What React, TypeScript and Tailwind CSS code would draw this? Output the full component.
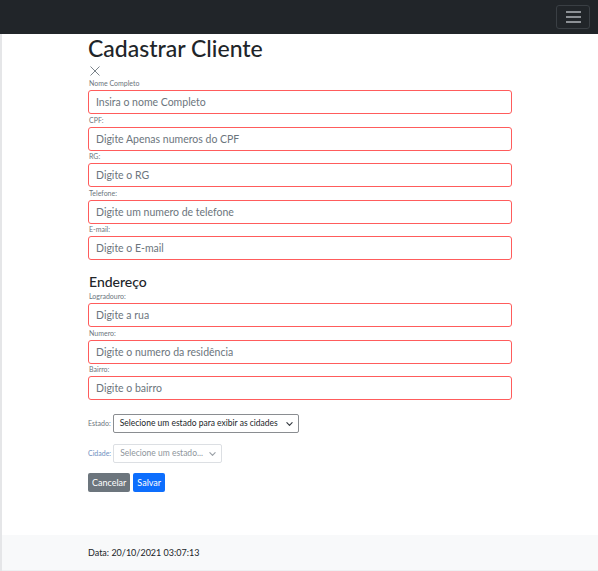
import { FC } from 'react';

const fields = [
  { label: 'Nome Completo', placeholder: 'Insira o nome Completo' },
  { label: 'CPF:', placeholder: 'Digite Apenas numeros do CPF' },
  { label: 'RG:', placeholder: 'Digite o RG' },
  { label: 'Telefone:', placeholder: 'Digite um numero de telefone' },
  { label: 'E-mail:', placeholder: 'Digite o E-mail' },
];

const addressFields = [
  { label: 'Logradouro:', placeholder: 'Digite a rua' },
  { label: 'Numero:', placeholder: 'Digite o numero da residência' },
  { label: 'Bairro:', placeholder: 'Digite o bairro' },
];

const Field: FC<{ label: string; placeholder: string }> = ({ label, placeholder }) => (
  <div className="flex flex-col">
    <label className="text-[7px] leading-[11px] text-[#6c757d] h-[12px] pl-[1px] whitespace-nowrap">{label}</label>
    <input
      placeholder={placeholder}
      className="h-[24px] w-full rounded-[3px] border border-[#ff5c5c] px-[7px] text-[10.5px] outline-none placeholder:text-[#6c757d]"
    />
  </div>
);

const Chevron: FC<{ light?: boolean }> = ({ light }) => (
  <svg width="7" height="7" viewBox="0 0 16 16" className="absolute right-[6px] top-1/2 -translate-y-1/2">
    <path d="M2 5l6 6 6-6" fill="none" stroke={light ? '#9aa0a6' : '#343a40'} strokeWidth="2.6" strokeLinecap="round" strokeLinejoin="round" />
  </svg>
);

export default function App() {
  return (
    <div className="min-h-[571px] w-[598px] bg-white flex flex-col" style={{ fontFamily: 'Lato, "Noto Sans", sans-serif' }}>
      <nav className="h-[34px] bg-[#212529] flex items-center justify-end pr-[8px]">
        <button className="w-[34px] h-[24px] rounded-[3px] border border-[#3a3f44] flex flex-col items-center justify-center gap-[3px]">
          <span className="block w-[15px] h-[2px] bg-[#8c9095]" />
          <span className="block w-[15px] h-[2px] bg-[#8c9095]" />
          <span className="block w-[15px] h-[2px] bg-[#8c9095]" />
        </button>
      </nav>
      <div className="flex-1 flex flex-col border-l-2 border-[#e5e6e8]">
        <main className="flex-1 pl-[86px] pr-[86px]">
          <h1 className="text-[23px] leading-[29px] font-medium text-[#212529]">Cadastrar Cliente</h1>
          <button className="mt-[1px] ml-[1px] h-[14px] w-[12px] flex items-center justify-center">
            <svg width="10" height="10" viewBox="0 0 10 10">
              <path d="M0.5 0.5l9 9M9.5 0.5l-9 9" stroke="#6c757d" strokeWidth="0.9" />
            </svg>
          </button>
          <div className="flex flex-col gap-[0.5px]">
            {fields.map((f) => (
              <Field key={f.label} {...f} />
            ))}
          </div>
          <h2 className="mt-[13px] text-[14px] leading-[18px] font-medium text-[#212529] pl-[1px]">Endereço</h2>
          <div className="flex flex-col gap-[0.5px]">
            {addressFields.map((f) => (
              <Field key={f.label} {...f} />
            ))}
          </div>
          <div className="mt-[14px] flex items-center gap-[2px]">
            <span className="text-[7px] text-[#6c757d]">Estado:</span>
            <div className="relative">
              <div className="h-[19px] w-[186px] rounded-[2px] border border-[#8a8d91] pl-[6px] text-[8.5px] leading-[17px] text-[#212529] whitespace-nowrap overflow-hidden">
                Selecione um estado para exibir as cidades
              </div>
              <Chevron />
            </div>
          </div>
          <div className="mt-[11px] flex items-center gap-[2px]">
            <span className="text-[7px] text-[#6f8fc0]">Cidade:</span>
            <div className="relative">
              <div className="h-[19px] w-[109px] rounded-[2px] border border-[#dcdfe3] pl-[6px] text-[8.5px] leading-[17px] text-[#8e959c] whitespace-nowrap overflow-hidden">
                Selecione um estado...
              </div>
              <Chevron light />
            </div>
          </div>
          <div className="mt-[10px] flex gap-[3px]">
            <button className="h-[19px] px-[4px] rounded-[2px] bg-[#6c757d] text-white text-[9px]">Cancelar</button>
            <button className="h-[19px] px-[4px] rounded-[2px] bg-[#0d6efd] text-white text-[9px]">Salvar</button>
          </div>
        </main>
        <footer className="h-[36px] bg-[#f8f9fa] flex items-center pl-[86px] border-b border-[#eef0f2]">
          <span className="text-[9px] text-[#212529]">Data: 20/10/2021 03:07:13</span>
        </footer>
      </div>
    </div>
  );
}
